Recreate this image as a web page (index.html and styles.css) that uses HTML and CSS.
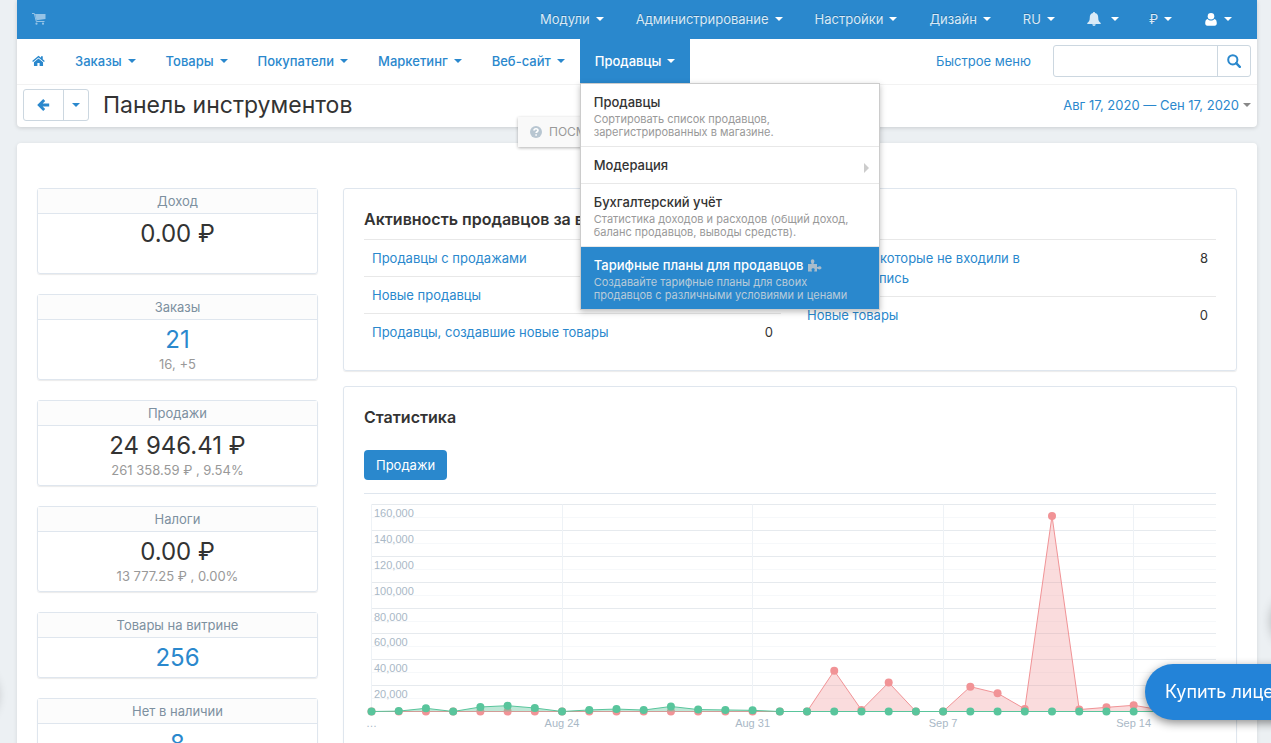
FILE: index.html
```html
<!DOCTYPE html>
<html lang="ru">
<head>
    <meta charset="UTF-8">
    <meta name="viewport" content="width=device-width, initial-scale=1.0">
    <title>Панель инструментов</title>
    <link rel="stylesheet" href="styles.css">
</head>
<body>
    <div class="page">
        <header class="header">
            <div class="topbar">
                <a href="#" class="cart" aria-label="Витрина">
                    <svg width="14" height="12" viewBox="0 0 14 12"><path d="M3 1h10.500v5L4.500 7.200z" fill="#fff"/><path d="M0 .5h2.300L4.300 8.500h8.200" fill="none" stroke="#fff"/><circle cx="4.500" cy="10.700" r="1.100" fill="#fff"/><circle cx="11" cy="10.700" r="1.100" fill="#fff"/></svg>
                </a>
                <nav class="top-menu">
                    <a href="#">Модули <span class="caret"></span></a>
                    <a href="#">Администрирование <span class="caret"></span></a>
                    <a href="#">Настройки <span class="caret"></span></a>
                    <a href="#">Дизайн <span class="caret"></span></a>
                    <a href="#">RU <span class="caret"></span></a>
                    <a href="#" class="bell" aria-label="Уведомления">
                        <svg width="14" height="14" viewBox="0 0 14 14"><path d="M7 0c.6 0 1 .4 1 1 2.200.5 3.200 2 3.200 4.200 0 3.300.9 4.600 2.500 5.800v.9H.3V11C1.900 9.800 2.800 8.500 2.800 5.200 2.800 3 3.800 1.500 6 1c0-.6.4-1 1-1zM5.300 12.300h3.400C8.600 13.300 8 14 7 14s-1.600-.7-1.700-1.700z" fill="currentColor"/></svg>
                        <span class="caret"></span>
                    </a>
                    <a href="#" class="currency">₽ <span class="caret"></span></a>
                    <a href="#" class="user" aria-label="Профиль">
                        <svg width="12" height="13" viewBox="0 0 12 13"><circle cx="6" cy="3.300" r="3.300" fill="currentColor"/><path d="M2.700 6c-1.800.2-2.500 2-2.500 4.300C.2 12 1 12.700 2.300 12.700h7.400c1.300 0 2.100-.7 2.100-2.400C11.800 8 11.100 6.200 9.300 6 8.500 7 7.300 7.500 6 7.500S3.500 7 2.700 6z" fill="currentColor"/></svg>
                        <span class="caret"></span>
                    </a>
                </nav>
            </div>

            <div class="navbar">
                <nav class="main-menu">
                    <a href="#" class="home" aria-label="Главная">
                        <svg width="13" height="12" viewBox="0 0 14 12"><path d="M7 .3.2 6.100l.9 1.100L7 2.200l5.900 5 .9-1.100-2.200-1.900V.8H9.700v1.800z" fill="currentColor"/><path d="M7 3.200 2.100 7.300v4.200h3.700V8.200h2.400v3.300h3.700V7.300z" fill="currentColor"/></svg>
                    </a>
                    <a href="#">Заказы <span class="caret"></span></a>
                    <a href="#">Товары <span class="caret"></span></a>
                    <a href="#">Покупатели <span class="caret"></span></a>
                    <a href="#">Маркетинг <span class="caret"></span></a>
                    <a href="#">Веб-сайт <span class="caret"></span></a>
                    <div class="menu-item">
                        <a href="#" class="active">Продавцы <span class="caret"></span></a>
                        <div class="dropdown">
                            <a href="#">
                                <strong>Продавцы</strong>
                                <small>Сортировать список продавцов, зарегистрированных в магазине.</small>
                            </a>
                            <a href="#" class="has-submenu">
                                <strong>Модерация</strong>
                            </a>
                            <a href="#">
                                <strong>Бухгалтерский учёт</strong>
                                <small>Статистика доходов и расходов (общий доход, баланс продавцов, выводы средств).</small>
                            </a>
                            <a href="#" class="selected">
                                <strong>Тарифные планы для продавцов
                                    <svg width="14" height="13" viewBox="0 0 14 13"><path d="M0 5h3.500C4 4.500 2.800 3.800 2.800 2.300 2.800 1 3.600.2 4.600.2s1.800.8 1.800 2.100C6.400 3.800 5.200 4.500 5.700 5H9v3c.6.5 1.200-.8 2.500-.8 1.200 0 2 .7 2 1.600s-.8 1.600-2 1.600c-1.300 0-1.900-1.200-2.500-.7V12.500H6.300c-.5-.6.4-1 .4-2 0-.8-.7-1.300-1.600-1.300s-1.600.5-1.600 1.300c0 1 .9 1.400.4 2H0z" fill="#a9bccb"/></svg>
                                </strong>
                                <small>Создавайте тарифные планы для своих продавцов с различными условиями и ценами</small>
                            </a>
                        </div>
                    </div>
                </nav>
                <a href="#" class="quick-menu">Быстрое меню</a>
                <form class="search">
                    <input type="text" aria-label="Поиск">
                    <button type="button" aria-label="Найти">
                        <svg width="14" height="14" viewBox="0 0 14 14"><circle cx="5.800" cy="5.800" r="4.600" fill="none" stroke="currentColor" stroke-width="2"/><path d="m9.200 9.200 3.600 3.600" stroke="currentColor" stroke-width="2.400" stroke-linecap="round"/></svg>
                    </button>
                </form>
            </div>

            <div class="titlebar">
                <div class="back-group">
                    <button type="button" aria-label="Назад">
                        <svg width="13" height="12" viewBox="0 0 13 12"><path d="M7.200 1 2.200 6l5 5M2.500 6h9.700" fill="none" stroke="currentColor" stroke-width="2.800"/></svg>
                    </button>
                    <button type="button" aria-label="История"><span class="caret"></span></button>
                </div>
                <h1>Панель инструментов</h1>
                <a href="#" class="date-range">Авг 17, 2020 — Сен 17, 2020 <span class="caret"></span></a>
                <a href="#" class="help-tab">
                    <svg width="12" height="12" viewBox="0 0 12 12"><circle cx="6" cy="6" r="6" fill="#b8c6d1"/><path d="M4 4.600C4 3.400 4.900 2.700 6 2.700s2 .7 2 1.700c0 1.300-1.900 1.400-1.900 2.700M6.100 8.200v1.500" fill="none" stroke="#fff" stroke-width="1.600"/></svg>
                    ПОСМОТРЕТЬ ВИДЕО
                </a>
            </div>
        </header>

        <main class="content">
            <aside class="cards">
                <div class="card">
                    <h3>Доход</h3>
                    <div class="card-body">
                        <p class="value">0.00 ₽</p>
                        <p class="note"></p>
                    </div>
                </div>
                <div class="card">
                    <h3>Заказы</h3>
                    <div class="card-body">
                        <p class="value"><a href="#">21</a></p>
                        <p class="note">16, +5</p>
                    </div>
                </div>
                <div class="card">
                    <h3>Продажи</h3>
                    <div class="card-body">
                        <p class="value">24 946.41 ₽</p>
                        <p class="note">261 358.59 ₽ , 9.54%</p>
                    </div>
                </div>
                <div class="card">
                    <h3>Налоги</h3>
                    <div class="card-body">
                        <p class="value">0.00 ₽</p>
                        <p class="note">13 777.25 ₽ , 0.00%</p>
                    </div>
                </div>
                <div class="card">
                    <h3>Товары на витрине</h3>
                    <div class="card-body">
                        <p class="value"><a href="#">256</a></p>
                    </div>
                </div>
                <div class="card">
                    <h3>Нет в наличии</h3>
                    <div class="card-body">
                        <p class="value"><a href="#">8</a></p>
                    </div>
                </div>
            </aside>

            <div class="widgets">
                <section class="widget activity">
                    <h2>Активность продавцов за выбранный период</h2>
                    <div class="activity-tables">
                        <table>
                            <tr>
                                <td><a href="#">Продавцы с продажами</a></td>
                                <td class="number">1</td>
                            </tr>
                            <tr>
                                <td><a href="#">Новые продавцы</a></td>
                                <td class="number">0</td>
                            </tr>
                            <tr>
                                <td><a href="#">Продавцы, создавшие новые товары</a></td>
                                <td class="number">0</td>
                            </tr>
                        </table>
                        <table>
                            <tr>
                                <td><a href="#">Продавцы, которые не входили в учётную запись</a></td>
                                <td class="number">8</td>
                            </tr>
                            <tr>
                                <td><a href="#">Новые товары</a></td>
                                <td class="number">0</td>
                            </tr>
                        </table>
                    </div>
                </section>

                <section class="widget statistics">
                    <h2>Статистика</h2>
                    <button type="button" class="tab">Продажи</button>
                    <div class="chart-box">
                        <svg id="chart" class="chart" viewBox="0 0 852 240"></svg>
                    </div>
                </section>
            </div>
        </main>
    </div>

    <span class="edge-shadow edge-left"></span>
    <span class="edge-shadow edge-right"></span>
    <a href="#" class="buy-button">Купить лицензию</a>

    <script src="chart.js"></script>
</body>
</html>
```
FILE: styles.css
```css
* {
    box-sizing: border-box;
}

body {
    margin: 0;
    background-color: #ecf0f3;
    color: #333;
    font-family: Inter, "Open Sans", sans-serif;
    font-size: 13px;
    line-height: 20px;
    overflow-x: hidden;
}

a {
    color: #2a88cd;
    text-decoration: none;
}

h1, h2, h3, p {
    margin: 0;
    font-weight: 400;
}

svg {
    flex: none;
}

.page {
    margin: 0 14px 0 17px;
}

.caret {
    display: inline-block;
    flex: none;
    border: 4px solid transparent;
    border-top-color: currentColor;
    border-bottom: 0;
}

/* Header */

.header {
    position: relative;
    z-index: 2;
    background-color: #fff;
    border-radius: 0 0 4px 4px;
    box-shadow: 0 1px 4px rgba(0, 0, 0, 0.15);
}

.topbar {
    display: flex;
    align-items: center;
    justify-content: space-between;
    height: 39px;
    padding: 0 10px 1px 15px;
    background-color: #2a88cd;
}

.cart {
    display: flex;
    opacity: 0.5;
}

.top-menu {
    display: flex;
}

.top-menu a {
    display: flex;
    align-items: center;
    gap: 6px;
    padding: 0 16px;
    color: #d9eaf7;
    text-shadow: 0 -1px 0 rgba(0, 0, 0, 0.2);
}

.top-menu .caret {
    border-top-color: #fff;
}

.top-menu .bell {
    gap: 10px;
    padding-right: 15px;
}

.top-menu .currency {
    padding: 0 15px;
}

.top-menu .user {
    gap: 7px;
    padding: 0 15px 0 18px;
    color: #fff;
}

.navbar {
    display: flex;
    align-items: center;
    height: 46px;
    padding: 0 6px 2px 0;
    border-bottom: 1px solid #f2f2f2;
}

.main-menu {
    display: flex;
    align-self: flex-start;
    flex: 1;
    font-weight: 500;
}

.main-menu > a,
.menu-item > a {
    display: flex;
    align-items: center;
    gap: 6px;
    height: 44px;
    padding: 0 15px;
}

.main-menu .active {
    background-color: #2a88cd;
    color: #fff;
}

.menu-item {
    position: relative;
}

.dropdown {
    position: absolute;
    top: 44px;
    left: 0;
    z-index: 10;
    width: 300px;
    background-color: #fff;
    border: 1px solid #ccc;
    box-shadow: 0 2px 6px rgba(0, 0, 0, 0.25);
}

.dropdown a {
    display: block;
    padding: 8px 13px 7px;
    border-bottom: 1px solid #e8e8e8;
    color: #333;
}

.dropdown a:last-child {
    border-bottom: 0;
}

.dropdown strong {
    display: flex;
    align-items: center;
    gap: 5px;
    font-weight: 500;
}

.dropdown small {
    display: block;
    padding-top: 1px;
    color: #999;
    font-size: 11px;
    font-weight: 400;
    line-height: 13px;
}

.dropdown .has-submenu {
    display: flex;
    align-items: center;
    justify-content: space-between;
    padding: 8px 10px 8px 13px;
}

.has-submenu::after {
    content: "";
    margin-top: 6px;
    border: 5px solid transparent;
    border-left-color: #ccc;
    border-right: 0;
}

.dropdown .selected {
    background-color: #2a88cd;
    color: #fff;
}

.selected small {
    color: #b9cbd9;
}

.quick-menu {
    margin-right: 22px;
}

.search {
    display: flex;
    width: 198px;
    height: 32px;
    border: 1px solid #ccd7e0;
    border-radius: 3px;
}

.search input {
    flex: 1;
    min-width: 0;
    padding: 0 8px;
    border: 0;
    background: none;
}

.search button {
    display: flex;
    align-items: center;
    justify-content: center;
    width: 33px;
    padding: 0;
    border: 0;
    border-left: 1px solid #ccd7e0;
    background: none;
    color: #2a88cd;
}

.titlebar {
    position: relative;
    display: flex;
    align-items: center;
    height: 42px;
    padding: 0 6px 2px;
}

.back-group {
    display: flex;
    margin-right: 14px;
    border: 1px solid #ccd7e0;
    border-radius: 3px;
}

.back-group button {
    display: flex;
    align-items: center;
    justify-content: center;
    width: 39px;
    height: 30px;
    padding: 0;
    border: 0;
    background: none;
    color: #2a88cd;
}

.back-group button + button {
    width: 25px;
    border-left: 1px solid #ccd7e0;
}

.titlebar h1 {
    flex: 1;
    font-size: 23px;
    line-height: 32px;
}

.date-range {
    display: flex;
    align-items: center;
    gap: 4px;
}

.date-range .caret {
    color: #888;
}

.help-tab {
    position: absolute;
    top: 32px;
    left: 501px;
    display: flex;
    align-items: center;
    gap: 7px;
    height: 30px;
    padding: 0 12px;
    background-color: #f9f9f9;
    box-shadow: 0 1px 3px rgba(0, 0, 0, 0.3);
    color: #999;
    font-size: 12px;
}

/* Dashboard */

.content {
    display: flex;
    gap: 25px;
    margin-top: 16px;
    padding: 45px 20px 20px;
    background-color: #fff;
    border-radius: 4px;
    box-shadow: 0 1px 4px rgba(0, 0, 0, 0.1);
}

.cards {
    display: flex;
    flex-direction: column;
    flex: none;
    gap: 20px;
    width: 281px;
}

.card,
.widget {
    border: 1px solid #dfe6ee;
    border-radius: 3px;
    box-shadow: 0 1px 1px rgba(0, 0, 0, 0.08);
}

.card {
    text-align: center;
}

.card h3 {
    height: 25px;
    padding-top: 2px;
    background-color: #fcfcfc;
    border-bottom: 1px solid #dfe6ee;
    color: #7d90a0;
    font-size: 13px;
    line-height: 20px;
}

.card-body {
    padding: 5px 0 4px;
}

.value {
    font-size: 24px;
    line-height: 30px;
}

.note {
    height: 20px;
    color: #999;
    line-height: 18px;
}

.widgets {
    display: flex;
    flex-direction: column;
    flex: 1;
    gap: 15px;
    min-width: 0;
}

.widget {
    padding: 20px;
}

.widget h2 {
    font-size: 16px;
    font-weight: 600;
    line-height: 20px;
}

.activity-tables {
    display: grid;
    grid-template-columns: 1fr 1fr;
    align-items: start;
    gap: 18px;
    margin-top: 10px;
}

.activity table {
    width: 100%;
    border-collapse: collapse;
}

.activity td {
    padding: 8px;
    border-top: 1px solid #e8e8e8;
    vertical-align: top;
}

.activity td a {
    display: block;
    max-width: 240px;
}

.activity .number {
    text-align: right;
}

.tab {
    display: block;
    height: 30px;
    margin: 23px 0 13px;
    padding: 0 12px;
    background-color: #2a88cd;
    border: 0;
    border-radius: 4px;
    color: #fff;
    font: inherit;
}

.chart-box {
    border-top: 1px solid #dfe6ee;
}

.chart {
    display: block;
    width: 100%;
    height: auto;
}

.chart text {
    fill: #a9b8c6;
    font-family: "Liberation Sans", Arial, sans-serif;
    font-size: 11px;
}

.grid-major {
    stroke: #e6eaee;
}

.grid-minor {
    stroke: #f6f8fa;
}

.grid-week {
    stroke: #eef2f6;
}

/* Floating elements */

.buy-button {
    position: fixed;
    right: -68px;
    bottom: 23px;
    z-index: 5;
    padding: 0 20px;
    background-color: #2383d8;
    border-radius: 28px;
    box-shadow: 0 3px 10px rgba(0, 0, 0, 0.45);
    color: #fff;
    font-size: 18px;
    line-height: 56px;
}

.edge-shadow {
    position: fixed;
    width: 56px;
    height: 56px;
    border-radius: 28px;
    box-shadow: 0 3px 12px rgba(0, 0, 0, 0.3);
}

.edge-left {
    bottom: 23px;
    left: -60px;
}

.edge-right {
    right: -57px;
    bottom: 97px;
}
```
FILE: chart.js
```javascript
const chart = document.getElementById('chart');
const left = 7.5;
const right = 852;
const top_ = 10.5;
const bottom = 217.5;
const step = 27.22;
const unit = (bottom - top_) / 160000; // height of one rouble

// daily totals, Aug 17 - Sep 17
const current = [0, 0, 0, 0, 0, 0, 0, 0, 0, 0, 0, 0, 0, 0, 0, 0, 0, 31500, 1200, 22400, 0, 0, 19200, 14100, 2000, 151200, 1500, 3200, 4800, 1200, 0, 0];
const previous = [0, 300, 2500, 0, 3500, 4500, 2700, 0, 1200, 1900, 1100, 3900, 1500, 1200, 900, 0, 0, 0, 0, 0, 0, 0, 0, 0, 0, 0, 0, 0, 0, 0, 0, 0];
const labels = [[0, '…'], [7, 'Aug 24'], [14, 'Aug 31'], [21, 'Sep 7'], [28, 'Sep 14']];

function line(x1, y1, x2, y2, name) {
    return `<line x1="${x1}" y1="${y1}" x2="${x2}" y2="${y2}" class="${name}"/>`;
}

function series(values, color, fill) {
    const points = values.map((value, i) => [left + i * step, bottom - value * unit]);
    const path = points.map(point => point.join(',')).join(' ');
    const end = points[points.length - 1][0];
    let out = `<polygon points="${left},${bottom} ${path} ${end},${bottom}" fill="${fill}"/>`;
    out += `<polyline points="${path}" fill="none" stroke="${color}"/>`;
    points.forEach(point => {
        out += `<circle cx="${point[0]}" cy="${point[1]}" r="4" fill="${color}"/>`;
    });
    return out;
}

let html = '';
for (let i = 0; i < 8; i++) {
    const y = Math.floor(top_ + i * (bottom - top_) / 8) + 0.5;
    html += line(left, y, right, y, 'grid-major');
    html += line(left, y + 13, right, y + 13, 'grid-minor');
}
labels.forEach(([day]) => {
    const x = Math.floor(left + day * step) + 0.5;
    html += line(x, top_, x, bottom, 'grid-week');
});
for (let i = 0; i < 8; i++) {
    const y = Math.round(top_ + 12.5 + i * (bottom - top_) / 8);
    html += `<text x="10" y="${y}">${(160 - i * 20)},000</text>`;
}
html += series(current, '#f19396', 'rgba(241, 147, 150, 0.32)');
html += series(previous, '#59c59c', 'rgba(89, 197, 156, 0.4)');
labels.forEach(([day, text]) => {
    html += `<text x="${left + day * step}" y="233" text-anchor="middle">${text}</text>`;
});
chart.innerHTML = html;
```
